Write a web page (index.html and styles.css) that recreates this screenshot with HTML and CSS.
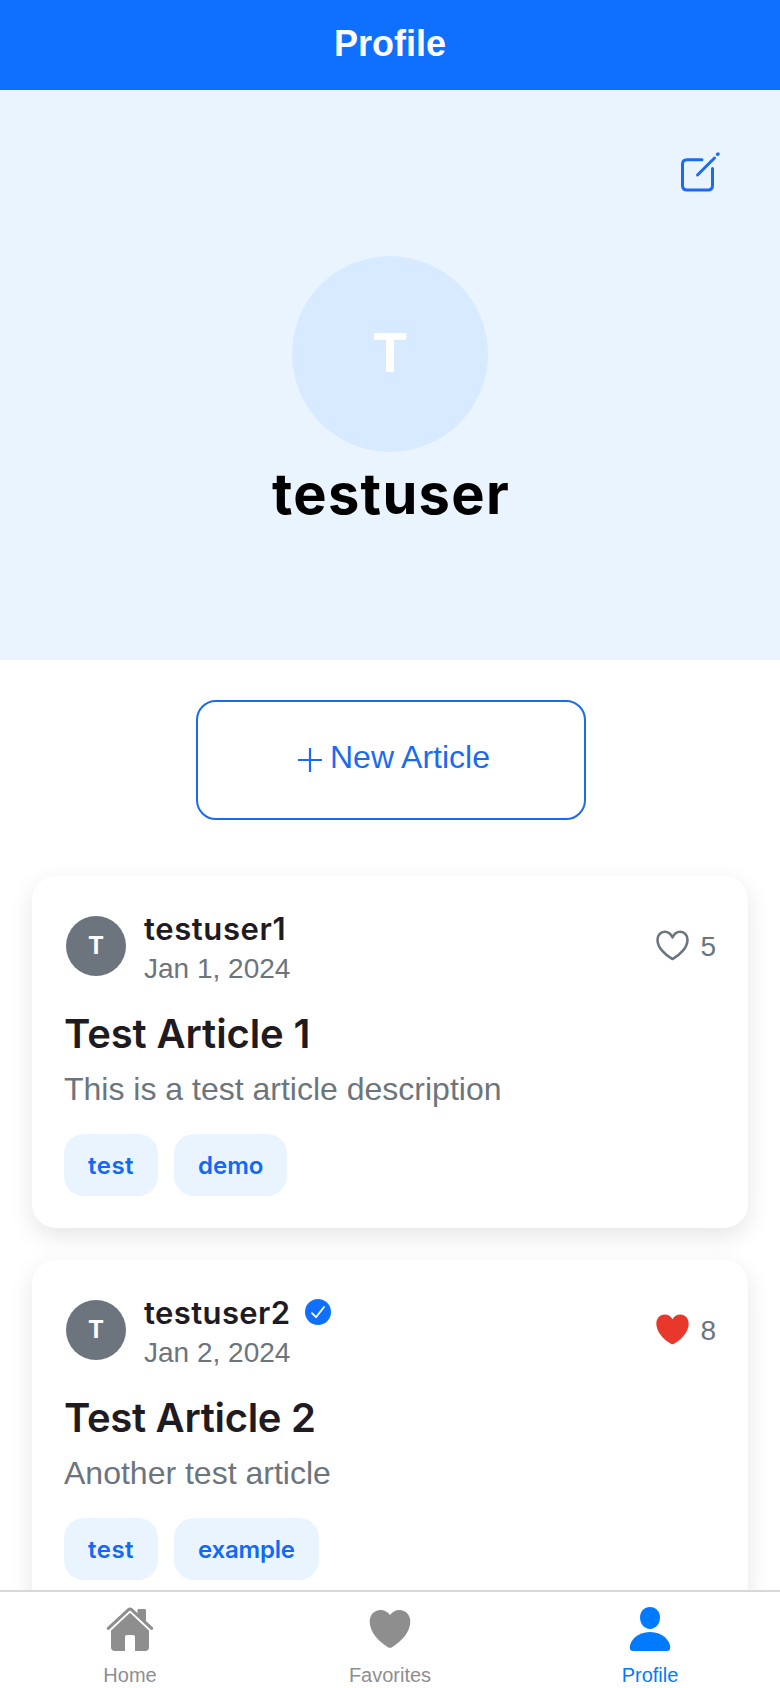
FILE: index.html
```html
<!DOCTYPE html>
<html lang="en">
<head>
<meta charset="utf-8">
<title>Profile</title>
<link rel="stylesheet" href="styles.css">
</head>
<body>
<div class="app">
  <header class="topbar"><h1 class="topbar-title">Profile</h1></header>
  <main class="content">
    <section class="hero">
      <button class="edit" aria-label="Edit profile">
        <svg width="40" height="42" viewBox="0 0 40 42" fill="none" stroke="#1c6bee" stroke-width="3" stroke-linecap="round" stroke-linejoin="round"><path d="M22 8.700H7Q2.500 8.700 2.500 13.200V34.500Q2.500 39 7 39H28Q32.500 39 32.500 34.500V17.500"/><path d="M17.500 24L34.500 7"/><path d="M37.600 3.400L38 3" stroke-width="3.400"/></svg>
      </button>
      <div class="avatar-lg">T</div>
      <h2 class="name">testuser</h2>
    </section>
    <button class="new-article">
      <svg class="plus" width="24" height="24" viewBox="0 0 24 24" stroke="#1c6bee" stroke-width="2.200"><path d="M12 0V24M0 12H24"/></svg>
      <span class="new-label">New Article</span>
    </button>
    <section class="feed">
      <article class="card">
        <div class="card-head">
          <div class="avatar">T</div>
          <div class="byline">
            <div class="author"><span class="author-name">testuser1</span></div>
            <div class="date">Jan 1, 2024</div>
          </div>
          <div class="likes">
            <svg width="33" height="31" viewBox="0 0 34 32" fill="none" stroke="#6c757d" stroke-width="2.600" stroke-linejoin="round"><path d="M17 7.600C15 3.500 12 1.800 9 1.800C4.600 1.800 1.500 5.400 1.500 10C1.500 18 9 25.500 17 30C25 25.500 32.500 18 32.500 10C32.500 5.400 29.400 1.800 25 1.800C22 1.800 19 3.500 17 7.600Z"/></svg>
            <span class="count">5</span>
          </div>
        </div>
        <h3 class="title">Test Article 1</h3>
        <p class="desc">This is a test article description</p>
        <div class="tags"><span class="tag tag-short">test</span><span class="tag">demo</span></div>
      </article>
      <article class="card">
        <div class="card-head">
          <div class="avatar">T</div>
          <div class="byline">
            <div class="author"><span class="author-name name-two">testuser2</span>
              <svg class="verified" width="26" height="26" viewBox="0 0 26 26"><circle cx="13" cy="13" r="13" fill="#0f6fff"/><path d="M7 14.200L11 18.200L19 8" fill="none" stroke="#fff" stroke-width="1.800" stroke-linecap="round" stroke-linejoin="round"/></svg>
            </div>
            <div class="date">Jan 2, 2024</div>
          </div>
          <div class="likes">
            <svg width="33" height="31" viewBox="0 0 34 32" fill="#e8382c"><path d="M17 5.500C15 2 12 .6 9 .6C4 .6 .3 4.600 .3 10C.3 18.500 8 26.500 15.800 30.900Q17 31.500 18.200 30.900C26 26.500 33.700 18.500 33.700 10C33.700 4.600 30 .6 25 .6C22 .6 19 2 17 5.500Z"/></svg>
            <span class="count">8</span>
          </div>
        </div>
        <h3 class="title title-two">Test Article 2</h3>
        <p class="desc">Another test article</p>
        <div class="tags"><span class="tag tag-short">test</span><span class="tag tag-long">example</span></div>
      </article>
    </section>
  </main>
  <nav class="tabs">
    <a class="tab">
      <svg width="48" height="46" viewBox="0 0 48 46" fill="#8e8e8f"><path d="M33 3H38.500Q40 3 40 4.500V17L31.500 9V4.500Q31.500 3 33 3Z"/><path d="M5 22L24 5L43 22V41Q43 45 39 45H9Q5 45 5 41Z"/><path d="M2.300 22.400L22.500 3.600Q24 2.300 25.500 3.600L45.700 22.400" fill="none" stroke="#fff" stroke-width="6.800" stroke-linecap="round"/><path d="M2.300 22.400L22.500 3.600Q24 2.300 25.500 3.600L45.700 22.400" fill="none" stroke="#8e8e8f" stroke-width="3" stroke-linecap="round"/><path d="M33 3H38.500Q40 3 40 4.500V17L31.500 9V4.500Q31.500 3 33 3Z"/><path d="M19 46V31Q19 29 21 29H27Q29 29 29 31V46Z" fill="#fff"/></svg>
      <span>Home</span>
    </a>
    <a class="tab">
      <svg width="48" height="46" viewBox="0 0 48 46" fill="#8e8e8f"><path d="M24 9C22 6 18.500 4 14.500 4C8.200 4 3.700 9 3.700 15.500C3.700 26 12 35 22 41.200Q24 42.400 26 41.200C36 35 44.300 26 44.300 15.500C44.300 9 39.800 4 33.500 4C29.500 4 26 6 24 9Z"/></svg>
      <span>Favorites</span>
    </a>
    <a class="tab tab-active">
      <svg width="48" height="46" viewBox="0 0 48 46" fill="#007aff"><path d="M24 1C29.800 1 34 5.500 34 11.500C34 18 29.500 23 24 23C18.500 23 14 18 14 11.500C14 5.500 18.200 1 24 1Z"/><path d="M24 26C37 26 44.200 35 44.200 41.500Q44.200 45 41 45H7Q3.800 45 3.800 41.500C3.800 35 11 26 24 26Z"/></svg>
      <span>Profile</span>
    </a>
  </nav>
</div>
</body>
</html>
```

FILE: styles.css
```css
* { box-sizing: border-box; margin: 0; padding: 0; }
body { font-family: "Liberation Sans", Arial, sans-serif; background: #fff; }
button { border: 0; background: none; font: inherit; }
svg { display: block; flex: none; }
.app { height: 1688px; display: flex; flex-direction: column; overflow: hidden; }
.topbar { height: 90px; flex: none; background: #0f6fff; display: flex; justify-content: center; }
.topbar-title { color: #fff; font-size: 36px; line-height: 88px; font-weight: 700; }
.content { flex: 1; min-height: 0; overflow: hidden; display: flex; flex-direction: column; align-items: center; }
.hero { width: 100%; height: 570px; flex: none; background: #eaf4ff; display: flex; flex-direction: column; align-items: center; padding-top: 61px; }
.edit { align-self: flex-end; margin-right: 60px; height: 42px; }
.avatar-lg { margin-top: 63px; width: 196px; height: 196px; border-radius: 50%; background: #d8eaff; color: #fff; font: 700 54px/194px Inter, sans-serif; text-align: center; }
.name { margin-top: 8px; padding-left: 2px; font: 700 56px/68px Inter, sans-serif; letter-spacing: 1.3px; color: #000; }
.new-article { flex: none; margin: 40px 0 56px 2px; padding-left: 6px; width: 390px; height: 120px; border: 2px solid #1c6bee; border-radius: 20px; display: flex; align-items: center; justify-content: center; gap: 8px; color: #1c6bee; font-size: 32px; }
.new-label { line-height: 36px; margin-top: -6px; }
.feed { width: 100%; padding: 0 32px; display: flex; flex-direction: column; gap: 32px; }
.card { height: 352px; flex: none; border-radius: 24px; background: #fff; padding: 32px; box-shadow: 0 8px 24px rgba(0, 0, 0, .1); }
.card-head { display: flex; height: 76px; }
.avatar { margin: 8px 0 0 2px; width: 60px; height: 60px; border-radius: 50%; background: #6c757d; color: #fff; font: 700 24px/60px Inter, sans-serif; text-align: center; }
.byline { margin-left: 18px; }
.author { display: flex; align-items: flex-start; gap: 14px; height: 43px; }
.author-name { font: 600 31px/42px Inter, sans-serif; letter-spacing: .6px; color: #1f1b20; }
.name-two { letter-spacing: .4px; }
.verified { margin-top: 7px; }
.date { font-size: 28px; line-height: 36px; color: #6c757d; }
.likes { margin: 23px 0 0 auto; height: 32px; display: flex; align-items: center; gap: 11px; }
.likes svg { margin-top: -3px; }
.count { font-size: 28px; line-height: 32px; color: #6c757d; }
.title { margin-top: 24px; font: 600 40px/52px Inter, sans-serif; letter-spacing: -.1px; color: #1f1b20; }
.title-two { letter-spacing: -.3px; }
.desc { margin-top: 7px; font-size: 32px; line-height: 44px; color: #6c757d; }
.tags { margin-top: 23px; display: flex; gap: 16px; }
.tag { height: 62px; padding: 0 24px; border-radius: 20px; background: #eaf4ff; color: #1169f5; font: 600 24px/64px Inter, sans-serif; }
.tag-short { letter-spacing: .5px; }
.tag-long { letter-spacing: -.2px; }
.tabs { height: 98px; flex: none; background: #fff; border-top: 2px solid #d8d8d8; display: flex; }
.tab { flex: 1; display: flex; flex-direction: column; align-items: center; padding-top: 14px; gap: 12px; color: #8e8e8f; font-size: 20px; line-height: 23px; }
.tab-active { color: #007aff; }
```
